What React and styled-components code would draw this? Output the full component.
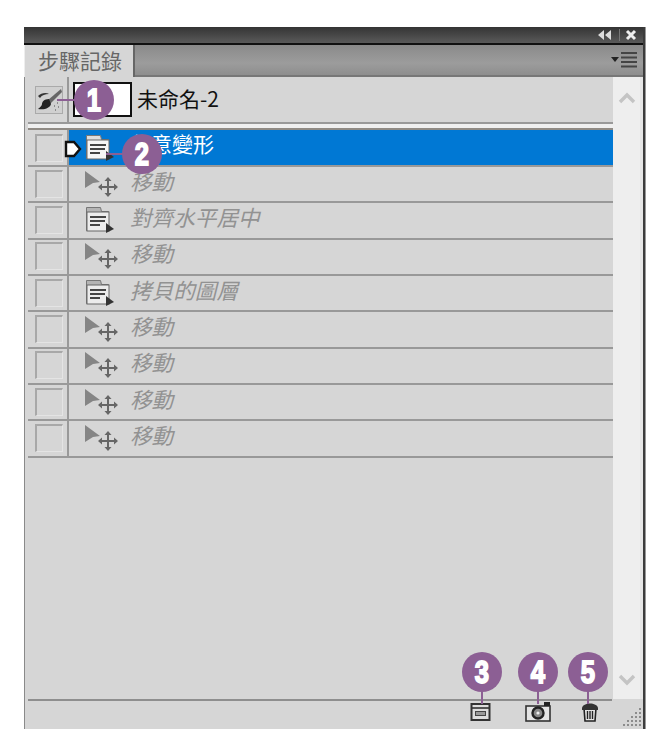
import React from 'react'
import styled, { createGlobalStyle } from 'styled-components'

const GlobalStyle = createGlobalStyle`
  html, body { margin: 0; padding: 0; background: #fff; }
  body { font-family: "Noto Sans CJK TC", "Liberation Sans", sans-serif; }
`

const Page = styled.div`
  position: relative;
  width: 668px;
  height: 749px;
  overflow: hidden;
  padding: 27px 0 0 24px;
  box-sizing: border-box;
`

const Panel = styled.div`
  width: 619px;
  height: 702px;
  display: flex;
  flex-direction: column;
  background: #d6d6d6;
  box-shadow: 2px 0 0 #3c3c3c, 3px 0 0 #999;
`

const TitleBar = styled.div`
  height: 16px;
  flex: none;
  display: flex;
  justify-content: flex-end;
  align-items: center;
  padding-right: 4px;
  background: linear-gradient(#343434, #5a5a5a);
  border-bottom: 2px solid #111;
`

const TabBar = styled.div`
  height: 30px;
  flex: none;
  display: flex;
  justify-content: space-between;
  background: linear-gradient(#8a8a8a, #9c9c9c 60%, #8e8e8e);
  border-bottom: 2px solid #777;
`

const Tab = styled.div`
  width: 111px;
  background: #d6d6d6;
  border-left: 1px solid #eee;
  border-right: 2px solid #666;
  display: flex;
  align-items: center;
  padding: 0 0 2px 13px;
  box-sizing: border-box;
  font-size: 21px;
  color: #666;
  margin-bottom: -2px;
`

const MenuBtn = styled.div`
  display: flex;
  align-items: center;
  padding-right: 5px;
`

const Body = styled.div`
  flex: 1;
  min-height: 0;
  display: flex;
  border-left: 1px solid #8a8a8a;
  padding-left: 3px;
  border-right: 3px solid #e6e6e6;
`

const Main = styled.div`
  flex: 1;
  min-width: 0;
  display: flex;
  flex-direction: column;
`

const Scrollbar = styled.div`
  width: 27px;
  flex: none;
  background: #eeeeee;
  display: flex;
  flex-direction: column;
  align-items: center;
  justify-content: space-between;
  padding: 15px 0 13px;
  box-sizing: border-box;
`

const SnapRow = styled.div`
  height: 45px;
  flex: none;
  display: flex;
  align-items: center;
  border-bottom: 2px solid #999;
`

const Divider = styled.div`
  height: 4px;
  flex: none;
  background: #efefef;
  border-bottom: 2px solid #8f8a84;
`

const LeftCell = styled.div`
  width: 41px;
  align-self: stretch;
  flex: none;
  display: flex;
  align-items: center;
  justify-content: center;
  padding-left: 2px;
  box-sizing: border-box;
  border-right: 2px solid #999;
`

const Thumb = styled.div`
  width: 55px;
  height: 31px;
  margin: 0 0 1px 4px;
  background: #fff;
  border: 2px solid #111;
  flex: none;
`

const DocName = styled.div`
  margin: 0 0 4px 5px;
  font-size: 21px;
  line-height: 28px;
  color: #111;
`

const Row = styled.div`
  height: 35px;
  flex: none;
  display: flex;
  align-items: center;
  border-bottom: 2px solid #999;
  margin-bottom: -0.7px;
`

const CheckBox = styled.div`
  width: 28px;
  height: 28px;
  flex: none;
  box-sizing: border-box;
  border-top: 2px solid #a8a8a8;
  border-left: 2px solid #a8a8a8;
  border-right: 1px solid #e4e4e4;
  border-bottom: 1px solid #e4e4e4;
`

const StepArea = styled.div`
  flex: 1;
  align-self: stretch;
  position: relative;
  display: flex;
  align-items: center;
  padding-left: 15px;
  background: ${p => (p.$active ? '#0078d4' : 'transparent')};
`

const IconSlot = styled.div`
  width: 34px;
  height: 28px;
  flex: none;
  display: flex;
  align-items: center;
`

const StepLabel = styled.div`
  margin: 0 0 ${p => (p.$active ? '9px' : '6px')} 12px;
  font-size: ${p => (p.$active ? '21px' : '21.6px')};
  line-height: 26px;
  font-style: ${p => (p.$active ? 'normal' : 'italic')};
  color: ${p => (p.$active ? '#fff' : '#929292')};
`

const Marker = styled.svg`
  position: absolute;
  left: -5px;
  top: 10px;
`

const Footer = styled.div`
  height: 30px;
  flex: none;
  border-left: 1px solid #8a8a8a;
  padding: 0 0 0 3px;
`

const FootRow = styled.div`
  height: 28px;
  display: flex;
  align-items: flex-start;
  padding-top: 2px;
  background: linear-gradient(#8e8e8e, #8e8e8e) no-repeat 0 0 / 584px 2px;
`

const FootIcon = styled.div`
  display: flex;
  margin-left: ${p => p.$gap}px;
  padding-top: ${p => p.$top || 0}px;
`

const Callout = styled.div`
  position: absolute;
  left: ${p => p.$x - 20}px;
  top: ${p => p.$y - 20}px;
  width: 40px;
  height: 40px;
  border-radius: 50%;
  background: #8c5f94;
  display: flex;
  align-items: center;
  justify-content: center;
`

const CalloutNum = styled.span`
  display: block;
  font-family: "Liberation Sans", sans-serif;
  font-weight: 700;
  font-size: 32px;
  line-height: 40px;
  color: #fff;
  -webkit-text-stroke: 1.8px #fff;
  transform: scaleX(0.8);
`

const Leader = styled.div`
  position: absolute;
  left: ${p => p.$x}px;
  top: ${p => p.$y}px;
  width: ${p => p.$w}px;
  height: ${p => p.$h}px;
  background: #8c5f94;
`

const CollapseIcon = () => (
  <svg width="42" height="12" viewBox="0 0 42 12">
    <path d="M7 1v10L1 6zM14 1v10L8 6z" fill="#ddd" />
    <rect x="22" y="0" width="1" height="12" fill="#777" />
    <path d="M30 2l8 8M38 2l-8 8" stroke="#eee" strokeWidth="3" />
  </svg>
)

const PanelMenuIcon = () => (
  <svg width="27" height="18" viewBox="0 0 27 18">
    <path d="M0 6h8l-4 5z" fill="#222" />
    <path d="M10 2h16M10 6.500h16M10 11h16M10 15.500h16" stroke="#444" strokeWidth="2" />
  </svg>
)

const BrushIcon = () => (
  <svg width="28" height="28" viewBox="0 0 28 28">
    <rect x="0.500" y="0.500" width="27" height="27" fill="#d0d0d0" stroke="#aaa" />
    <path d="M26 3L13 14l2 4L27 6z" fill="#666" />
    <path d="M14 13c-5 0-7 3-7 5s-4 5-4 5c7 1 12-1 13-5z" fill="#222" />
    <path d="M3 10c3-3 8-4 11-2-4 0-7 1-9 4z" fill="#333" />
    <path d="M19 20h1M22 17h1M23 21h1M20 24h1" stroke="#777" strokeWidth="1.4" />
  </svg>
)

const ActionIcon = ({ light }) => (
  <svg width="30" height="28" viewBox="0 0 30 28">
    <path d="M2.500 1.500h14l1 4h7v19h-22z" fill={light ? '#ddd' : '#b4b4b4'} stroke="#777" />
    <rect x="3" y="6" width="22" height="19" fill={light ? '#f6f6f6' : '#ececec'} stroke="#666" />
    <path d="M6 11h16M6 15h15M6 19h10" stroke="#444" strokeWidth="1.8" />
    <path d="M22 17l8 6-8 4z" fill="#333" />
  </svg>
)

const MoveIcon = () => (
  <svg width="34" height="28" viewBox="0 0 34 28">
    <path d="M1 1l15 11-7 1-8 5z" fill="#858585" />
    <path d="M24 10v14M17 17h14" stroke="#666" strokeWidth="2" />
    <path d="M24 7l3.500 4h-7zM24 27l3.500-4h-7zM14 17l4-3.500v7zM34 17l-4-3.500v7z" fill="#666" />
  </svg>
)

const FrameIcon = () => (
  <svg width="21" height="20" viewBox="0 0 21 20">
    <rect x="1.500" y="2" width="18" height="16" fill="#ddd" stroke="#333" strokeWidth="2" />
    <path d="M2 6h17" stroke="#333" strokeWidth="1.6" />
    <rect x="5.500" y="9.500" width="10" height="4" fill="#999" stroke="#444" />
  </svg>
)

const CameraIcon = () => (
  <svg width="26" height="20" viewBox="0 0 26 20">
    <rect x="1" y="4" width="24" height="15" fill="#e4e4e4" stroke="#333" strokeWidth="1.6" />
    <rect x="19" y="0" width="6" height="4" fill="#222" />
    <circle cx="13" cy="11" r="5.500" fill="#888" stroke="#222" strokeWidth="2.4" />
    <circle cx="13" cy="11" r="1.600" fill="#eee" />
  </svg>
)

const TrashIcon = () => (
  <svg width="18" height="20" viewBox="0 0 18 20">
    <path d="M3 6h12l-1 13H4z" fill="#e4e4e4" stroke="#222" strokeWidth="1.6" />
    <path d="M1 6c1-6 15-6 16 0v2H1z" fill="#333" />
    <path d="M6.500 9v8M9 9v8M11.500 9v8" stroke="#222" strokeWidth="1.4" />
  </svg>
)

const Grip = () => (
  <svg width="20" height="20" viewBox="0 0 20 20">
    {[[17, 3], [17, 7], [13, 7], [17, 11], [13, 11], [9, 11], [17, 15], [13, 15], [9, 15], [5, 15], [17, 19], [13, 19], [9, 19], [5, 19], [1, 19]].map(([x, y]) => (
      <rect key={`${x}-${y}`} x={x} y={y - 1} width="2" height="2" fill="#8c8c8c" />
    ))}
  </svg>
)

const Chevron = ({ up }) => (
  <svg width="18" height="12" viewBox="0 0 18 12">
    <path d={up ? 'M2 10l7-7 7 7' : 'M2 2l7 7 7-7'} fill="none" stroke="#c4c4c4" strokeWidth="3.4" />
  </svg>
)

const steps = [
  { kind: 'action', label: '任意變形', active: true },
  { kind: 'move', label: '移動' },
  { kind: 'action', label: '對齊水平居中' },
  { kind: 'move', label: '移動' },
  { kind: 'action', label: '拷貝的圖層' },
  { kind: 'move', label: '移動' },
  { kind: 'move', label: '移動' },
  { kind: 'move', label: '移動' },
  { kind: 'move', label: '移動' },
]

const callouts = [
  { n: 1, x: 94, y: 100 },
  { n: 2, x: 142, y: 154 },
  { n: 3, x: 482, y: 672 },
  { n: 4, x: 538, y: 672 },
  { n: 5, x: 588, y: 672 },
]

const leaders = [
  { x: 57, y: 99, w: 20, h: 2 },
  { x: 106, y: 153, w: 18, h: 2 },
  { x: 481, y: 690, w: 2, h: 14 },
  { x: 537, y: 690, w: 2, h: 14 },
  { x: 587, y: 690, w: 2, h: 14 },
]

export default function App() {
  return (
    <Page>
      <GlobalStyle />
      <Panel>
        <TitleBar>
          <CollapseIcon />
        </TitleBar>
        <TabBar>
          <Tab>步驟記錄</Tab>
          <MenuBtn>
            <PanelMenuIcon />
          </MenuBtn>
        </TabBar>
        <Body>
          <Main>
            <SnapRow>
              <LeftCell>
                <BrushIcon />
              </LeftCell>
              <Thumb />
              <DocName>未命名-2</DocName>
            </SnapRow>
            <Divider />
            {steps.map((step, i) => (
              <Row key={i}>
                <LeftCell>
                  <CheckBox />
                </LeftCell>
                <StepArea $active={step.active}>
                  {step.active && (
                    <Marker width="18" height="18" viewBox="0 0 18 18">
                      <path d="M2 2h8l6 7-6 7H2z" fill="#fff" stroke="#111" strokeWidth="2.4" />
                    </Marker>
                  )}
                  <IconSlot>
                    {step.kind === 'move' ? <MoveIcon /> : <ActionIcon light={step.active} />}
                  </IconSlot>
                  <StepLabel $active={step.active}>{step.label}</StepLabel>
                </StepArea>
              </Row>
            ))}
          </Main>
          <Scrollbar>
            <Chevron up />
            <Chevron />
          </Scrollbar>
        </Body>
        <Footer>
          <FootRow>
            <FootIcon $gap={442} $top={1}><FrameIcon /></FootIcon>
            <FootIcon $gap={34} $top={1}><CameraIcon /></FootIcon>
            <FootIcon $gap={30} $top={1}><TrashIcon /></FootIcon>
            <FootIcon $gap={23} $top={5}><Grip /></FootIcon>
          </FootRow>
        </Footer>
      </Panel>
      {leaders.map((l, i) => (
        <Leader key={i} $x={l.x} $y={l.y} $w={l.w} $h={l.h} />
      ))}
      {callouts.map(c => (
        <Callout key={c.n} $x={c.x} $y={c.y}>
          <CalloutNum>{c.n}</CalloutNum>
        </Callout>
      ))}
    </Page>
  )
}
